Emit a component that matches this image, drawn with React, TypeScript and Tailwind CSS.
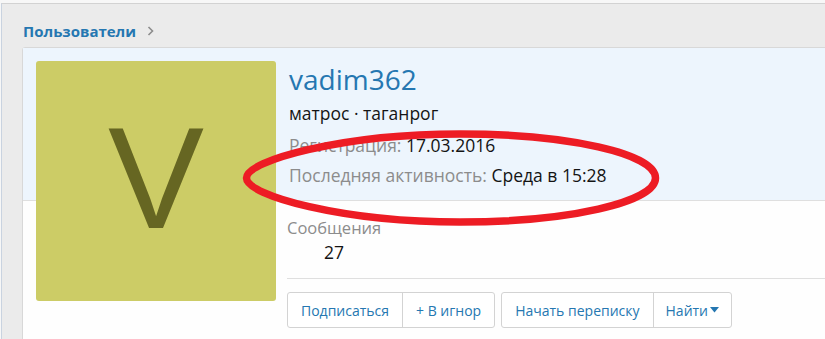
export default function App() {
  return (
    <div className="relative w-[825px] h-[339px] overflow-hidden bg-[#f7f7f7] pt-[3px] pl-[1px] font-['Open_Sans',sans-serif]">
      <div className="h-[400px] border-t border-l border-t-[#d2d2d2] border-l-[#c9d3e0] bg-[#ebebeb] pl-[20px] pt-[18px]">
        {/* breadcrumb */}
        <div className="flex items-center gap-[11px] pl-[1px] h-[18px]">
          <span className="text-[15px] font-bold text-[#2577b1] leading-none">Пользователи</span>
          <svg width="7" height="10" viewBox="0 0 7 10" className="text-[#8c8c8c]">
            <path d="M1.5 1 L5.5 5 L1.5 9" fill="none" stroke="currentColor" strokeWidth="1.6" />
          </svg>
        </div>

        {/* profile card */}
        <div className="mt-[7px] w-[830px] border border-[#d8d8d8] rounded-tl-[3px] bg-[#fefefe]">
          <div className="flex gap-[13px] bg-[#edf5fd] border-b border-[#dfdfdf] pl-[13px] pt-[13px] h-[153px]">
            <div className="shrink-0 w-[240px] h-[240px] rounded-[3px] bg-[#cccc66] flex items-center justify-center">
              <span className="text-[#666622] text-[144px] leading-none font-['Liberation_Sans',sans-serif] -mt-[4px]">V</span>
            </div>
            <div className="pt-[1px]">
              <div className="text-[28px] leading-[34px] text-[#2577b1]">vadim362</div>
              <div className="mt-[6px] text-[17.5px] leading-[22px] text-[#141414]">матрос · таганрог</div>
              <div className="mt-[10px] text-[17.5px] leading-[22px] text-[#8c8c8c]">
                Регистрация: <span className="text-[#141414]">17.03.2016</span>
              </div>
              <div className="mt-[8px] text-[17.5px] leading-[22px] text-[#8c8c8c]">
                Последняя активность: <span className="text-[#141414]">Среда в 15:28</span>
              </div>
            </div>
          </div>

          <div className="pl-[264px] pt-[15px] pb-[30px]">
            <dl className="inline-flex flex-col items-center">
              <dt className="text-[16.5px] leading-[22px] text-[#8c8c8c]">Сообщения</dt>
              <dd className="mt-[1px] text-[17.5px] leading-[24px] text-[#141414]">27</dd>
            </dl>
            <div className="mt-[14px] border-t border-[#dfdfdf] pt-[13px] flex gap-[6px]">
              <div className="flex h-[36px] border border-[#d3d3d3] rounded-[3px] bg-white text-[14px] text-[#2577b1]">
                <button className="px-[13px] border-r border-[#d3d3d3]">Подписаться</button>
                <button className="px-[13px]">+ В игнор</button>
              </div>
              <div className="flex h-[36px] border border-[#d3d3d3] rounded-[3px] bg-white text-[14px] text-[#2577b1]">
                <button className="px-[13px] border-r border-[#d3d3d3]">Начать переписку</button>
                <button className="px-[12px] flex items-center gap-[2px]">
                  Найти
                  <svg width="9" height="6" viewBox="0 0 9 6">
                    <path d="M0 0 H9 L4.5 5.5 Z" fill="#2577b1" />
                  </svg>
                </button>
              </div>
            </div>
          </div>
        </div>
      </div>

      {/* red hand-drawn annotation */}
      <svg className="absolute left-0 top-0 pointer-events-none" width="825" height="339" viewBox="0 0 825 339">
        <path
          d="M246.5 178 C246.5 160.4 342.6 134 460 134 C568 134 655.5 153.7 655.5 178 C655.5 202.3 568 222 460 222 C342.6 222 246.5 195.6 246.5 178 Z"
          fill="none"
          stroke="#ed1c24"
          strokeWidth="7.5"
        />
      </svg>
    </div>
  );
}
